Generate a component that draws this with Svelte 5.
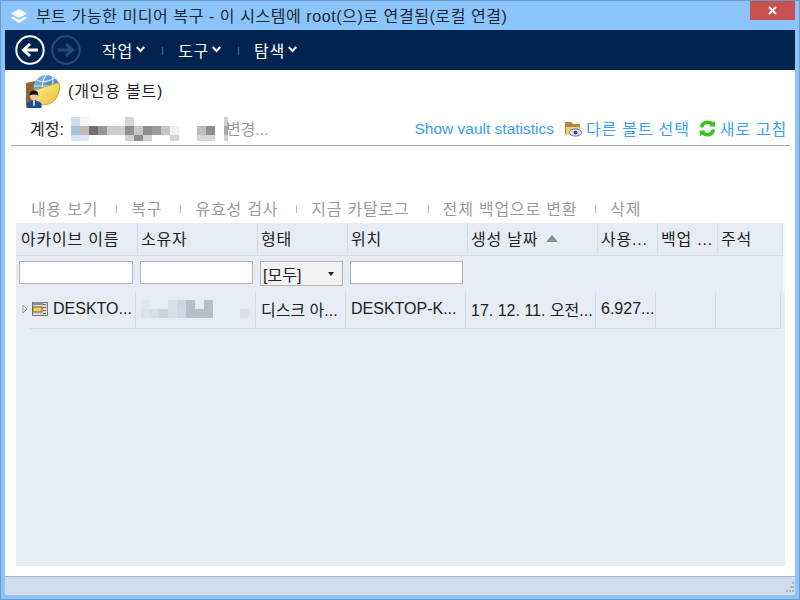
<script>
  const menus = ['작업', '도구', '탐색'];
  const actions = ['내용 보기', '복구', '유효성 검사', '지금 카탈로그', '전체 백업으로 변환', '삭제'];
  const columns = [
    { name: '아카이브 이름', w: 122 },
    { name: '소유자', w: 120 },
    { name: '형태', w: 90 },
    { name: '위치', w: 120 },
    { name: '생성 날짜', w: 130, sorted: true },
    { name: '사용...', w: 60 },
    { name: '백업 ...', w: 60 },
    { name: '주석', w: 65 }
  ];
  const cells = [
    { text: 'DESKTO...', w: 106, tree: true },
    { text: '', w: 120, blur: true },
    { text: '디스크 아...', w: 90 },
    { text: 'DESKTOP-K...', w: 120 },
    { text: '17. 12. 11. 오전...', w: 130 },
    { text: '6.927...', w: 60 },
    { text: '', w: 60 },
    { text: '', w: 65 }
  ];
  // mosaic squares [col, row, colour]
  const account = [
    [0,0,'#cddcee'],[1,0,'#f2f6fb'],[18,0,'#d0d0d0'],[6,0,'#d4d4d4'],
    [0,1,'#a6c3e6'],[1,1,'#c4bab6'],[2,1,'#6e6e6e'],[3,1,'#979797'],[4,1,'#cccccc'],[5,1,'#cccccc'],[6,1,'#8f8f8f'],[7,1,'#c6c6c6'],[8,1,'#8e8e8e'],[9,1,'#9b9b9b'],[10,1,'#c4c4c4'],[11,1,'#f0f0f0'],[14,1,'#bdbdbd'],[15,1,'#8f8f8f'],[18,1,'#aaaaaa'],
    [0,2,'#dae3f0'],[1,2,'#dde6f2'],[6,2,'#d0d0d0'],[7,2,'#8e8e8e'],[8,2,'#d2d2d2'],[11,2,'#d4d4d4'],[14,2,'#d6d6d6'],[15,2,'#d6d6d6'],[18,2,'#d0d0d0']
  ];
  const owner = [
    [0,0,'#e2e6ef'],[3,0,'#d9dde8'],[4,0,'#d0d4e0'],[5,0,'#b9bdca'],[7,0,'#b9bdca'],
    [0,1,'#dde1eb'],[1,1,'#d6dbe6'],[2,1,'#cdd2dd'],[3,1,'#d9dde8'],[4,1,'#d2d6e2'],[5,1,'#b9bdca'],[6,1,'#b9bdca'],[7,1,'#b9bdca'],[11,1,'#dadfe9']
  ];
</script>

<div class="window">
  <header class="titlebar">
    <svg class="app-icon" width="18" height="16" viewBox="0 0 18 16">
      <path d="M9 1 L17 5.5 L9 10 L1 5.5 Z" fill="#fff" />
      <path d="M3 8.6 L1 10 L9 15 L17 10 L15 8.6 L9 12 Z" fill="#fff" />
    </svg>
    <span class="title">부트 가능한 미디어 복구 - 이 시스템에 root(으)로 연결됨(로컬 연결)</span>
    <button class="close" aria-label="닫기">
      <svg width="9" height="9" viewBox="0 0 9 9"><path d="M1 1 L8 8 M8 1 L1 8" stroke="#fff" stroke-width="2" /></svg>
    </button>
  </header>

  <nav class="navbar">
    <svg class="nav-btn" width="30" height="30" viewBox="0 0 30 30">
      <circle cx="15" cy="15" r="13.7" fill="none" stroke="#fff" stroke-width="2" />
      <path d="M23 15 H9 M15 9 L8.5 15 L15 21" fill="none" stroke="#fff" stroke-width="3" />
    </svg>
    <svg class="nav-btn" width="30" height="30" viewBox="0 0 30 30">
      <circle cx="15" cy="15" r="13.7" fill="none" stroke="#2c4a70" stroke-width="2" />
      <path d="M7 15 H21 M15 9 L21.5 15 L15 21" fill="none" stroke="#2c4a70" stroke-width="3" />
    </svg>
    <div class="menus">
      {#each menus as menu, i}
        {#if i > 0}<span class="menu-sep"></span>{/if}
        <span class="menu">{menu}<svg width="9" height="7" viewBox="0 0 9 7"><path d="M0.7 1 L4.5 5 L8.3 1" fill="none" stroke="#fff" stroke-width="2" /></svg></span>
      {/each}
    </div>
  </nav>

  <main class="content">
    <div class="vault-head">
      <svg class="vault-icon" width="34" height="33" viewBox="0 0 34 33">
        <defs>
          <linearGradient id="globe" x1="0" y1="0" x2="1" y2="1">
            <stop offset="0" stop-color="#8fbce8" />
            <stop offset="1" stop-color="#1f5fae" />
          </linearGradient>
          <linearGradient id="folder" x1="0" y1="0" x2="1" y2="1">
            <stop offset="0" stop-color="#fdf09a" />
            <stop offset="1" stop-color="#e8bd32" />
          </linearGradient>
        </defs>
        <path d="M0 8 L9 6 L14 9 V30 H0 Z" fill="#8f6531" />
        <circle cx="20.5" cy="13" r="13" fill="url(#globe)" />
        <path d="M11 5 Q18 9 29 3 M20 0 Q15 7 17 14 M26 1 Q28 6 26 11 M8 11 H33" stroke="#dbe9f7" stroke-width="1.2" fill="none" />
        <path d="M9 15 L33 7.5 Q35 15 31 22 Q27 29 20 29.5 L11 30 Z" fill="url(#folder)" stroke="#c9a93c" />
        <path d="M0.5 33 V28.5 Q2 26 8 25.5 Q14 26 15.5 28.5 V33 Z" fill="#1d4f96" />
        <path d="M7 25.5 H9 L8.5 31 H7.5 Z" fill="#fff" />
        <circle cx="8" cy="21" r="4.2" fill="#eac8a2" />
        <path d="M3.6 20.5 Q3.5 15.5 8 15.5 Q12.5 15.5 12.4 20.5 Q8 18.5 3.6 20.5 Z" fill="#111" />
      </svg>
      <span class="ko lift">(개인용 볼트)</span>
    </div>

    <div class="account-row">
      <span class="account lift">계정:</span>
      <div class="change-wrap">
        <svg class="mosaic" width="158" height="24">
          {#each account as [c, r, fill]}
            {#if c === 18}
              <rect x="153" y={r * 9} width="4" height="9" {fill} />
            {:else}
              <rect x={c * 9} y={r * 9} width="9" height="9" {fill} />
            {/if}
          {/each}
        </svg>
        <span class="change">변경...</span>
      </div>
      <div class="links">
        <span class="stats">Show vault statistics</span>
        <span class="link-icon ko">
          <svg width="17" height="16" viewBox="0 0 17 16">
            <path d="M0 1 H6 L8 3 H15 V13 H0 Z" fill="#b08a45" />
            <path d="M1 6 H16 L14 14 H1 Z" fill="#f2d468" />
            <ellipse cx="10.5" cy="11.5" rx="6" ry="3.6" fill="#e6e6f5" stroke="#6a72c0" />
            <circle cx="10.5" cy="11.5" r="2" fill="#3f469e" />
          </svg>
          <span class="lift">다른 볼트 선택</span>
        </span>
        <span class="link-icon ko">
          <svg width="17" height="17" viewBox="0 0 17 17">
            <path d="M2.5 7.5 A6.2 6.2 0 0 1 13 4" fill="none" stroke="#3cc21e" stroke-width="3.5" />
            <path d="M10 6.5 L16.5 6.5 L15.5 0.5 Z" fill="#3cc21e" />
            <path d="M14.5 9.5 A6.2 6.2 0 0 1 4 13" fill="none" stroke="#3cc21e" stroke-width="3.5" />
            <path d="M7 10.5 L0.5 10.5 L1.5 16.5 Z" fill="#3cc21e" />
          </svg>
          <span class="lift">새로 고침</span>
        </span>
      </div>
    </div>

    <div class="actions ko">
      {#each actions as action, i}
        {#if i > 0}<span class="action-sep"></span>{/if}
        <span>{action}</span>
      {/each}
    </div>

    <section class="table">
      <div class="row head ko">
        {#each columns as col}
          <div class="th" style="width: {col.w}px">
            {col.name}
            {#if col.sorted}<svg class="sort" width="12" height="7" viewBox="0 0 12 7"><path d="M6 0 L12 7 H0 Z" fill="#8a8a8a" /></svg>{/if}
          </div>
        {/each}
      </div>
      <div class="row filters">
        <input class="filter first" />
        <input class="filter" />
        <div class="select">[모두]<svg width="6" height="4" viewBox="0 0 6 4"><path d="M0 0 H6 L3 4 Z" fill="#222" /></svg></div>
        <input class="filter" />
      </div>
      <div class="row data">
        {#each cells as cell}
          <div class="td" style="width: {cell.w}px">
            {#if cell.tree}
              <svg class="arrow" width="6" height="10" viewBox="0 0 6 10"><path d="M1 1 L5 5 L1 9 Z" fill="#fff" stroke="#9a9a9a" /></svg>
              <svg class="archive" width="16" height="16" viewBox="0 0 16 16">
                <rect x="0.5" y="1.5" width="15" height="13" fill="#d8d8d8" stroke="#7a7a7a" />
                <rect x="1" y="1" width="10" height="3" fill="#8c8c8c" />
                <rect x="1" y="6" width="9" height="5" fill="#f0cf62" stroke="#6f6230" />
                <path d="M12.5 3 V14" stroke="#666" stroke-width="3" stroke-dasharray="1 2" />
              </svg>
            {/if}
            {#if cell.blur}
              <svg class="mosaic" width="108" height="18">
                {#each owner as [c, r, fill]}
                  <rect x={c * 9} y={r * 9} width="9" height="9" {fill} />
                {/each}
              </svg>
            {/if}
            {cell.text}
          </div>
        {/each}
      </div>
    </section>
  </main>

  <footer class="status">
    <svg class="grip" width="8" height="12" viewBox="0 0 8 12">
      <path d="M6 0 h2 v2 h-2 z M4 4 h2 v2 h-2 z M6 4 h2 v2 h-2 z M0 8 h2 v2 h-2 z M3 8 h2 v2 h-2 z M6 8 h2 v2 h-2 z" fill="#b0b0b0" />
    </svg>
  </footer>
</div>

<style>
  :global(body) {
    margin: 0;
  }

  .window {
    width: 800px;
    height: 600px;
    box-sizing: border-box;
    display: flex;
    flex-direction: column;
    padding: 0 4px 4px;
    background: #8ac4f9;
    border: 1px solid #6b9ccc;
    font-family: "Liberation Sans", "Noto Sans CJK KR", sans-serif;
    font-size: 16px;
    color: #222;
  }

  .ko {
    letter-spacing: 0.8px;
  }

  .lift {
    padding-bottom: 2px;
  }

  .titlebar {
    height: 29px;
    flex: none;
    display: flex;
    align-items: center;
    padding-left: 5px;
  }

  .app-icon {
    margin-right: 8px;
  }

  .title {
    color: #1c2733;
    white-space: nowrap;
    letter-spacing: 0.57px;
    padding-bottom: 2px;
  }

  .close {
    margin-left: auto;
    align-self: flex-start;
    width: 45px;
    height: 19px;
    border: 0;
    padding: 0;
    background: #c75050;
    display: flex;
    align-items: center;
    justify-content: center;
  }

  .navbar {
    height: 40px;
    flex: none;
    display: flex;
    align-items: center;
    background: #00234f;
    padding-left: 10px;
    gap: 6px;
  }

  .menus {
    display: flex;
    align-items: center;
    margin-left: 15px;
    color: #fff;
    letter-spacing: 0.8px;
  }

  .menu {
    display: flex;
    align-items: center;
    gap: 3px;
    padding-bottom: 1px;
  }

  .menu-sep {
    width: 1px;
    height: 8px;
    background: #3f6ea6;
    margin: 2px 15px 0 17px;
  }

  .content {
    flex: 1;
    min-height: 0;
    display: flex;
    flex-direction: column;
    background: #fff;
    padding: 0 5px 10px 6px;
    border-bottom: 1px solid #a8b8cc;
  }

  .vault-head {
    height: 42px;
    flex: none;
    display: flex;
    align-items: center;
    padding-left: 15px;
    gap: 8px;
  }

  .account-row {
    height: 34px;
    box-sizing: border-box;
    flex: none;
    display: flex;
    align-items: center;
    padding: 0 3px 0 19px;
    border-bottom: 1px solid #a6a6a6;
  }

  .account {
    margin-right: 7px;
    white-space: nowrap;
  }

  .change-wrap {
    position: relative;
    width: 200px;
    height: 24px;
    flex: none;
  }

  .mosaic {
    display: block;
    flex: none;
  }

  .change {
    position: absolute;
    left: 155px;
    top: -1px;
    color: #9a9a9a;
    white-space: nowrap;
  }

  .links {
    margin-left: auto;
    display: flex;
    align-items: center;
    gap: 9px;
    color: #3aa0f5;
  }

  .stats {
    font-size: 15.5px;
    margin-right: 2px;
    margin-top: 1px;
    white-space: nowrap;
  }

  .link-icon {
    display: flex;
    align-items: center;
    gap: 4px;
    white-space: nowrap;
  }

  .actions {
    flex: none;
    height: 27px;
    box-sizing: border-box;
    padding: 0 0 4px 20px;
    margin-top: 50px;
    display: flex;
    align-items: center;
    color: #9a9a9a;
  }

  .action-sep {
    width: 1px;
    height: 8px;
    background: #b8b8b8;
    margin: 2px 14px 0 18px;
  }

  .table {
    flex: 1;
    margin: 0 5px;
    background: #e6ebf4;
    display: flex;
    flex-direction: column;
  }

  .row {
    display: flex;
    flex: none;
  }

  .head {
    height: 33px;
    box-sizing: border-box;
    padding-bottom: 2px;
    border-bottom: 1px solid #d2ddec;
    border-right: 2px solid #f2f4f9;
  }

  .th {
    box-sizing: border-box;
    display: flex;
    align-items: center;
    gap: 8px;
    padding-left: 3px;
    border-right: 1px solid #d2ddec;
    white-space: nowrap;
  }

  .th:first-child {
    padding-left: 5px;
  }

  .filters {
    height: 35px;
    box-sizing: border-box;
    align-items: flex-start;
    padding: 5px 0 0 3px;
    gap: 7px;
    border-right: 2px solid #f2f4f9;
  }

  .filter {
    width: 113px;
    height: 23px;
    box-sizing: border-box;
    border: 1px solid #b5b5b5;
    background: #fff;
    padding: 0;
  }

  .filter.first {
    width: 114px;
  }

  .select {
    width: 83px;
    height: 25px;
    box-sizing: border-box;
    border: 1px solid #b5b5b5;
    background: #f2f2f2;
    display: flex;
    align-items: center;
    justify-content: space-between;
    padding: 0 8px 0 2px;
  }

  .data {
    width: max-content;
    height: 38px;
    box-sizing: border-box;
    margin-left: 14px;
    border-bottom: 1px solid #d2ddec;
  }

  .td {
    box-sizing: border-box;
    display: flex;
    align-items: center;
    gap: 4px;
    padding: 0 0 2px 5px;
    border-right: 1px solid #d2ddec;
    white-space: nowrap;
  }

  .td:first-child {
    padding-left: 0;
  }

  .arrow {
    margin-left: -8px;
  }

  .archive {
    margin-right: 1px;
  }

  .status {
    height: 17px;
    flex: none;
    background: #d2ddec;
    display: flex;
    justify-content: flex-end;
    align-items: flex-end;
    padding: 0 1px 1px 0;
  }
</style>
